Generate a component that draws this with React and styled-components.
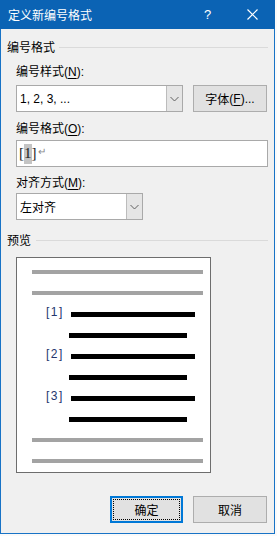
import React from 'react';
import styled, {createGlobalStyle} from 'styled-components';

const GlobalStyle = createGlobalStyle`
  html, body {
    margin: 0;
    padding: 0;
    background: #fafafa;
  }
  * {
    box-sizing: border-box;
  }
`;

const CJK = `"Noto Sans CJK SC", "Noto Sans", sans-serif`;
const LATIN = `"Liberation Sans", "Noto Sans CJK SC", sans-serif`;

const Window = styled.div`
  width: 275px;
  height: 534px;
  border: 1px solid #1873c6;
  border-top: none;
  background: #f0f0f0;
  display: flex;
  flex-direction: column;
  font-family: ${CJK};
  font-size: 12px;
  color: #000;
`;

const TitleBar = styled.div`
  height: 29px;
  background: #0b63b4;
  color: #fff;
  display: flex;
  align-items: center;
  padding-left: 8px;
  margin: 0 -1px;
`;

const Title = styled.div`
  flex: 1;
  font-size: 12px;
  line-height: 16px;
`;

const TitleButton = styled.div`
  width: 45px;
  height: 29px;
  display: flex;
  align-items: center;
  justify-content: center;
  font-family: ${LATIN};
  font-size: 13px;
`;

const Body = styled.div`
  flex: 1;
  display: flex;
  flex-direction: column;
  padding: 0 6px 0 6px;
`;

const GroupHeader = styled.div`
  display: flex;
  align-items: center;
  height: 16px;
  line-height: 16px;
  margin-top: ${p => p.$top}px;

  &::after {
    content: '';
    flex: 1;
    height: 1px;
    background: #dadada;
    margin-left: ${p => p.$gap}px;
  }
`;

const Indent = styled.div`
  display: flex;
  flex-direction: column;
  padding-left: 9px;
`;

const Label = styled.div`
  height: 16px;
  line-height: 16px;
  margin-top: ${p => p.$top}px;
  font-family: ${CJK};

  span {
    font-family: ${LATIN};
  }
  u {
    text-decoration-thickness: 1px;
    text-underline-offset: 2px;
  }
`;

const Row = styled.div`
  display: flex;
  gap: 10px;
  margin-top: ${p => p.$top}px;
`;

const Combo = styled.div`
  width: ${p => p.$w}px;
  height: 27px;
  border: 1px solid #a9a9a9;
  background: #fff;
  display: flex;
`;

const ComboText = styled.div`
  flex: 1;
  padding-left: 3px;
  display: flex;
  align-items: center;
  font-family: ${p => (p.$latin ? LATIN : CJK)};
  font-size: 12px;
`;

const ComboArrow = styled.div`
  width: 16px;
  border-left: 1px solid #bcbcbc;
  background: #e5e5e5;
  display: flex;
  align-items: center;
  justify-content: center;
`;

const Button = styled.div`
  width: ${p => p.$w || 73}px;
  height: 27px;
  background: #e1e1e1;
  border: ${p => (p.$primary ? '2px solid #0078d7' : '1px solid #adadad')};
  display: flex;
  align-items: center;
  justify-content: center;
  position: relative;
  font-family: ${CJK};
  font-size: 12px;

  u {
    text-decoration-thickness: 1px;
    text-underline-offset: 2px;
  }

  ${p =>
    p.$primary &&
    `
    &::after {
      content: '';
      position: absolute;
      inset: 1px;
      border: 1px dotted #000;
    }
  `}
`;

const TextBox = styled.div`
  margin-top: 4px;
  width: 252px;
  height: 27px;
  border: 1px solid #a9a9a9;
  background: #fff;
  display: flex;
  align-items: center;
  padding-left: 2px;
  font-family: "Liberation Serif", serif;
  font-size: 15px;
  color: #222;
`;

const Mark = styled.span`
  background: #c4c4c4;
  padding: 1px 0 2px;
`;

const Return = styled.span`
  font-family: ${LATIN};
  font-size: 10px;
  color: #888;
  margin-left: 1px;
  position: relative;
  top: -2px;
`;

const Preview = styled.div`
  margin: 9px 0 0 9px;
  width: 195px;
  height: 216px;
  background: #fff;
  border: 1px solid #6d6d6d;
  padding-top: 12px;
  display: flex;
  flex-direction: column;
  overflow: hidden;
`;

const PreviewRow = styled.div`
  height: 21px;
  flex-shrink: 0;
  display: flex;
  align-items: flex-start;
`;

const Line = styled.div`
  height: ${p => (p.$dark ? 5 : 4)}px;
  background: ${p => (p.$dark ? '#000' : '#a3a3a3')};
  margin-left: ${p => p.$left}px;
  width: ${p => p.$w}px;
`;

const Num = styled.div`
  width: 25px;
  margin-left: 29px;
  margin-top: -7px;
  font-family: ${LATIN};
  font-size: 12px;
  line-height: 14px;
  letter-spacing: 1.5px;
  color: #24366e;
`;

const Footer = styled.div`
  display: flex;
  justify-content: flex-end;
  gap: 10px;
  margin-top: 23px;
  padding-right: 1px;
`;

const Chevron = () => (
  <svg width="9" height="6" viewBox="0 0 9 6">
    <path d="M0.5 1 L4.5 5 L8.5 1" fill="none" stroke="#606060" strokeWidth="1" />
  </svg>
);

const CloseIcon = () => (
  <svg width="11" height="11" viewBox="0 0 11 11">
    <path d="M0.5 0.5 L10.5 10.5 M10.5 0.5 L0.5 10.5" stroke="#fff" strokeWidth="1.2" />
  </svg>
);

const PreviewItem = ({n}) => (
  <>
    <PreviewRow>
      <Num>[{n}]</Num>
      <Line $dark $left={0} $w={124} />
    </PreviewRow>
    <PreviewRow>
      <Line $dark $left={52} $w={118} />
    </PreviewRow>
  </>
);

export default function App() {
  return (
    <>
      <GlobalStyle />
      <Window>
        <TitleBar>
          <Title>定义新编号格式</Title>
          <TitleButton>?</TitleButton>
          <TitleButton>
            <CloseIcon />
          </TitleButton>
        </TitleBar>
        <Body>
          <GroupHeader $top={10} $gap={4}>编号格式</GroupHeader>
          <Indent>
            <Label $top={8}>
              编号样式<span>(<u>N</u>):</span>
            </Label>
            <Row $top={6}>
              <Combo $w={167}>
                <ComboText $latin>1, 2, 3, ...</ComboText>
                <ComboArrow>
                  <Chevron />
                </ComboArrow>
              </Combo>
              <Button $w={74}>
                字体<span style={{fontFamily: LATIN}}>(<u>F</u>)...</span>
              </Button>
            </Row>
            <Label $top={8}>
              编号格式<span>(<u>O</u>):</span>
            </Label>
            <TextBox>
              [<Mark>1</Mark>]<Return>↵</Return>
            </TextBox>
            <Label $top={7}>
              对齐方式<span>(<u>M</u>):</span>
            </Label>
            <Row $top={3}>
              <Combo $w={127}>
                <ComboText>左对齐</ComboText>
                <ComboArrow>
                  <Chevron />
                </ComboArrow>
              </Combo>
            </Row>
          </Indent>
          <GroupHeader $top={12} $gap={5}>预览</GroupHeader>
          <Preview>
            <PreviewRow>
              <Line $left={15} $w={171} />
            </PreviewRow>
            <PreviewRow>
              <Line $left={15} $w={171} />
            </PreviewRow>
            <PreviewItem n={1} />
            <PreviewItem n={2} />
            <PreviewItem n={3} />
            <PreviewRow>
              <Line $left={15} $w={171} />
            </PreviewRow>
            <PreviewRow>
              <Line $left={15} $w={171} />
            </PreviewRow>
          </Preview>
          <Footer>
            <Button $primary>确定</Button>
            <Button $w={74}>取消</Button>
          </Footer>
        </Body>
      </Window>
    </>
  );
}
